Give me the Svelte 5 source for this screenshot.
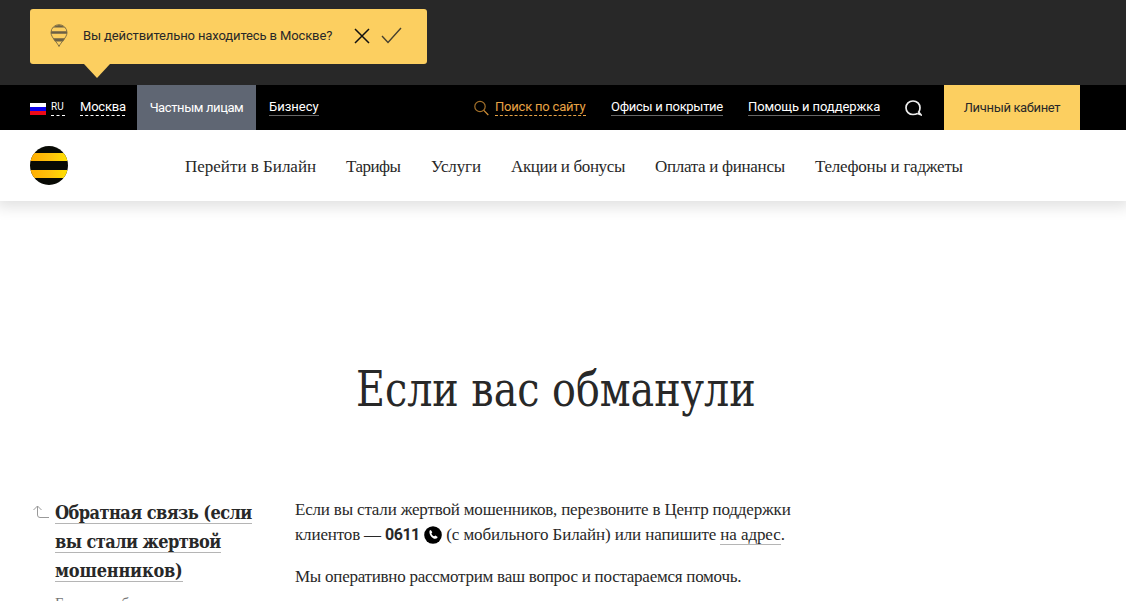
<script>
	let menu = [
		{ name: 'Перейти в Билайн', width: 131, spacing: 0 },
		{ name: 'Тарифы', width: 55, spacing: -0.5 },
		{ name: 'Услуги', width: 50, spacing: -0.1 },
		{ name: 'Акции и бонусы', width: 114, spacing: -0.37 },
		{ name: 'Оплата и финансы', width: 130, spacing: -0.3 },
		{ name: 'Телефоны и гаджеты', width: 148, spacing: -0.25 }
	];

	let showQuestion = true;

	function closeQuestion() {
		showQuestion = false;
	}
</script>

<div class="region">
	{#if showQuestion}
		<div class="question">
			<svg class="pin" width="18" height="24" viewBox="0 0 18 24">
				<path d="M3 3.500Q9-1.500 15 3.500zM1 7.300h16v2.500H1zM3 14.300h12l-2 3.200H5z" fill="#6b6045" />
				<path
					d="M9 22.500C7 18 1 13.500 1 8.500a8 7.800 0 0 1 16 0c0 5-6 9.500-8 14z"
					fill="none"
					stroke="#817044"
				/>
			</svg>
			<span>Вы действительно находитесь в Москве?</span>
			<button class="no" aria-label="Нет" on:click={closeQuestion}>
				<svg width="16" height="16" viewBox="0 0 16 16">
					<path d="M1 1l14 14M15 1L1 15" fill="none" stroke="#111" stroke-width="1.500" />
				</svg>
			</button>
			<button class="yes" aria-label="Да" on:click={closeQuestion}>
				<svg width="21" height="17" viewBox="0 0 21 17">
					<path d="M1 9l6 6.500L20 1" fill="none" stroke="#46402f" stroke-width="1.400" />
				</svg>
			</button>
		</div>
	{/if}
</div>

<nav class="top">
	<svg class="flag" width="16" height="12">
		<path d="M0 0h16v4H0z" fill="#fff" />
		<path d="M0 4h16v4H0z" fill="#0b00e8" />
		<path d="M0 8h16v4H0z" fill="#ed0a18" />
	</svg>
	<span class="link dashed lang">RU</span>
	<span class="link dashed city">Москва</span>
	<span class="tab">Частным лицам</span>
	<span class="link business">Бизнесу</span>
	<svg class="lens" width="15" height="16" viewBox="0 0 15 16">
		<circle cx="6" cy="6.500" r="5.200" fill="none" stroke="#a4712a" stroke-width="1.200" />
		<path d="M9.800 10.300l4.500 4.700" stroke="#d18f37" stroke-width="1.200" />
	</svg>
	<span class="link dashed search">Поиск по сайту</span>
	<span class="link offices">Офисы и покрытие</span>
	<span class="link help">Помощь и поддержка</span>
	<svg class="chat" width="17" height="16" viewBox="0 0 17 16">
		<path
			d="M12.500 13.500C11 14.300 9.700 14.500 8 14.500C4 14.500 1 11.500 1 7.700S4 1 8 1s7 3 7 6.800c0 1.900-.5 3.300-1.300 4.300l2.100 2.600-3.300-1.200"
			fill="none"
			stroke="#eee"
			stroke-width="1.700"
		/>
	</svg>
	<span class="cabinet">Личный кабинет</span>
</nav>

<header>
	<svg class="logo" width="38" height="39" viewBox="0 0 38 39">
		<defs>
			<clipPath id="ball"><ellipse cx="19" cy="19.500" rx="19" ry="19.500" /></clipPath>
			<linearGradient id="gold">
				<stop offset="0" stop-color="#ffad00" />
				<stop offset=".55" stop-color="#ffc30c" />
				<stop offset="1" stop-color="#ffe200" />
			</linearGradient>
		</defs>
		<g clip-path="url(#ball)">
			<path d="M0 0h38v39H0z" fill="#080a04" />
			<path d="M0 7h38v8H0zM0 24h38v8H0z" fill="url(#gold)" />
		</g>
	</svg>
	<div class="menu">
		{#each menu as item}
			<span style="width: {item.width}px; letter-spacing: {item.spacing}px">{item.name}</span>
		{/each}
	</div>
</header>

<h1>Если вас обманули</h1>

<main>
	<aside>
		<svg class="back" width="16" height="14" viewBox="0 0 16 14">
			<path d="M.5 5L4.500 1l4 4M4.500 1v9q0 2.500 2.500 2.500h9" fill="none" stroke="#999" />
		</svg>
		<div>
			<h2>
				<span>Обратная связь (если</span><br />
				<span>вы стали жертвой</span><br />
				<span class="last">мошенников)</span>
			</h2>
			<p class="current">Если вас обманули</p>
		</div>
	</aside>
	<article>
		<p>
			<span class="intro">Если вы стали жертвой мошенников, перезвоните в Центр поддержки</span><br />
			<span class="call">клиентов — <b>0611</b></span>
			<svg class="phone" width="18" height="18" viewBox="0 0 18 18">
				<circle cx="9" cy="9" r="8.800" fill="#000" />
				<path
					d="M5.500 4.700l1.300-.7 1.500 2.300-.9 1.100c.5 1.400 1.400 2.300 2.800 2.900l1.200-.9 2.300 1.500-.7 1.400C9.500 14.300 4.700 9.500 5.500 4.700z"
					fill="#fff"
				/>
			</svg>
			<span class="write">(с мобильного Билайн) или напишите <span class="address">на адрес</span>.</span>
		</p>
		<p class="promise">Мы оперативно рассмотрим ваш вопрос и постараемся помочь.</p>
	</article>
</main>

<style>
	:global(body) {
		background: #fff;
		color: #282828;
		font-family: 'Liberation Serif', serif;
		overflow: hidden;
	}

	.region {
		height: 85px;
		padding: 9px 30px 0;
		box-sizing: border-box;
		background: #282828;
	}
	.question {
		position: relative;
		display: flex;
		align-items: center;
		width: 397px;
		height: 55px;
		padding: 0 25px 2px 20px;
		box-sizing: border-box;
		border-radius: 3px;
		background: #fccf60;
		font: 13px Roboto, sans-serif;
	}
	.question::after {
		content: '';
		position: absolute;
		top: 55px;
		left: 54px;
		border: 13px solid transparent;
		border-top: 14px solid #fccf60;
		border-bottom: 0;
	}
	.question span {
		width: 249px;
		margin: 0 22px 0 15px;
		white-space: nowrap;
		letter-spacing: -0.12px;
	}
	button {
		display: flex;
		padding: 0;
		border: 0;
		background: none;
	}
	.no {
		margin-right: 11px;
	}

	/* Top bar */
	.top {
		display: flex;
		align-items: center;
		height: 45px;
		padding-left: 30px;
		background: #000;
		color: #fff;
		font: 13px/16px Roboto, sans-serif;
		letter-spacing: -0.2px;
		white-space: nowrap;
	}
	.top svg {
		flex: none;
	}
	.link {
		flex: none;
		border-bottom: 1px solid #666;
	}
	.dashed {
		border-bottom: 1px dashed #fff;
	}
	.flag {
		margin: 3px 5px 0 0;
	}
	.lang {
		width: 14px;
		margin-right: 15px;
		font-size: 10px;
		letter-spacing: 0.2px;
	}
	.city {
		width: 45px;
		margin-right: 12px;
	}
	.tab {
		width: 119px;
		margin-right: 13px;
		background: #5f6673;
		line-height: 45px;
		letter-spacing: -0.4px;
		text-align: center;
	}
	.business {
		width: 50px;
		margin-right: 155px;
		letter-spacing: 0;
	}
	.lens {
		margin-right: 6px;
	}
	.search {
		width: 91px;
		margin-right: 25px;
		border-color: #e8a345;
		color: #e8a345;
	}
	.offices {
		width: 112px;
		margin-right: 25px;
		letter-spacing: -0.3px;
	}
	.help {
		width: 132px;
		margin-right: 25px;
		letter-spacing: -0.1px;
	}
	.chat {
		margin-right: 22px;
	}
	.cabinet {
		width: 136px;
		background: #fccf60;
		color: #282828;
		line-height: 45px;
		letter-spacing: -0.35px;
		text-align: center;
	}

	header {
		display: flex;
		align-items: center;
		height: 71px;
		padding-left: 30px;
		box-shadow: 0 2px 14px 4px rgba(0, 0, 0, 0.12);
	}
	.menu {
		display: flex;
		gap: 30px;
		margin: 2px 0 0 117px;
		font-size: 17px;
		white-space: nowrap;
	}

	h1 {
		margin: 158px 0 0 356px;
		font: 48px/60px 'DejaVu Serif Condensed', 'DejaVu Serif', serif;
		font-stretch: condensed;
		white-space: nowrap;
		transform: scaleX(0.918);
		transform-origin: left;
	}

	main {
		display: flex;
		margin-top: 78px;
		padding-left: 33px;
	}
	aside {
		display: flex;
		width: 262px;
	}
	.back {
		flex: none;
		margin: 8px 6px 0 0;
	}
	h2 {
		margin: 1px 0 0;
		font: bold 18px/29px 'DejaVu Serif Condensed', 'DejaVu Serif', serif;
		font-stretch: condensed;
		letter-spacing: -0.56px;
		white-space: nowrap;
	}
	h2 span {
		border-bottom: 1px solid #b5b5b5;
	}
	.last {
		letter-spacing: -0.2px;
	}
	.current {
		margin: 8px 0 0;
		color: #777;
		font-size: 15px;
		line-height: 20px;
	}
	article {
		font-size: 17px;
		line-height: 25px;
		white-space: nowrap;
	}
	article p {
		margin: 0 0 17px;
	}
	.intro {
		letter-spacing: -0.18px;
	}
	.call {
		letter-spacing: -0.15px;
	}
	b {
		font: bold 16px/20px Roboto, sans-serif;
		letter-spacing: -0.5px;
	}
	.phone {
		vertical-align: -4px;
	}
	.write {
		letter-spacing: -0.1px;
	}
	article .promise {
		letter-spacing: -0.25px;
	}
	.address {
		border-bottom: 1px solid #b5b5b5;
	}
</style>
